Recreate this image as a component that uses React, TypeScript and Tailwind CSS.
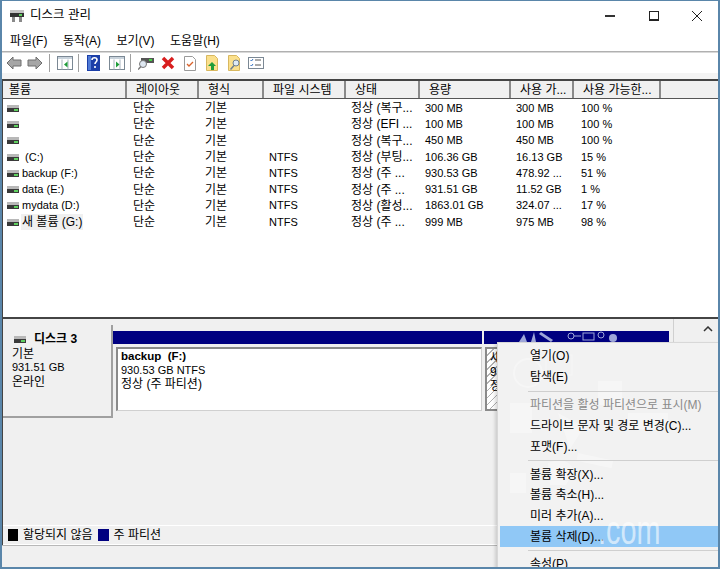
const columns = [
  { name: '볼륨', w: 'w-[124px]' },
  { name: '레이아웃', w: 'w-[72px]' },
  { name: '형식', w: 'w-[65px]' },
  { name: '파일 시스템', w: 'w-[82px]' },
  { name: '상태', w: 'w-[74px]' },
  { name: '용량', w: 'w-[91px]' },
  { name: '사용 가...', w: 'w-[63px]' },
  { name: '사용 가능한...', w: 'w-[87px]' },
];

const volumes = [
  ['', '', '정상 (복구...', '300 MB', '300 MB', '100 %'],
  ['', '', '정상 (EFI ...', '100 MB', '100 MB', '100 %'],
  ['', '', '정상 (복구...', '450 MB', '450 MB', '100 %'],
  ['\u00a0(C:)', 'NTFS', '정상 (부팅...', '106.36 GB', '16.13 GB', '15 %'],
  ['backup (F:)', 'NTFS', '정상 (주 ...', '930.53 GB', '478.92 ...', '51 %'],
  ['data (E:)', 'NTFS', '정상 (주 ...', '931.51 GB', '11.52 GB', '1 %'],
  ['mydata (D:)', 'NTFS', '정상 (활성...', '1863.01 GB', '324.07 ...', '17 %'],
  ['새 볼륨 (G:)', 'NTFS', '정상 (주 ...', '999 MB', '975 MB', '98 %'],
];

const DiskIcon = () => (
  <svg viewBox="0 0 12 7" className="h-[7px] w-[12px] shrink-0">
    <rect width="12" height="3" fill="#b8b8b8" />
    <rect y="3" width="12" height="4" fill="#3a3a3a" />
    <rect x="7" y="4" width="4" height="2" fill="#5fd05f" />
  </svg>
);

const Arrow = ({ flip }: { flip?: boolean }) => (
  <svg viewBox="0 0 16 14" className={`h-[14px] w-[16px] ${flip ? '-scale-x-100' : ''}`}>
    <path d="M1 7l6-6v3h8v6H7v3z" fill="#a6a6a6" stroke="#6e6e6e" />
  </svg>
);

const PanelIcon = ({ right }: { right?: boolean }) => (
  <svg viewBox="0 0 16 14" className="h-[14px] w-[16px]">
    <rect x=".5" y=".5" width="15" height="13" fill="#fff" stroke="#7b8894" />
    <rect x="1" y="1" width="14" height="2" fill="#c9d3dc" />
    <path d="M5 3.500v10M11 3.500v10" stroke="#a8b4bf" />
    {right ? <path d="M7 5.500l3.500 3L7 11.500z" fill="#1f9d3a" /> : <path d="M10.500 5.500L7 8.500l3.500 3z" fill="#1f9d3a" />}
  </svg>
);

const Toolbar = () => (
  <div className="flex h-5 items-center bg-white pl-[4px]">
    <Arrow />
    <div className="ml-[5px]"><Arrow flip /></div>
    <div className="ml-[6px] h-[18px] w-px bg-[#a0a0a0]" />
    <div className="ml-[7px]"><PanelIcon /></div>
    <div className="ml-[5px] h-[18px] w-px bg-[#a0a0a0]" />
    <svg viewBox="0 0 13 16" className="ml-[8px] h-[16px] w-[13px]">
      <rect width="13" height="16" fill="#1c3fa8" />
      <rect x="1" y="1" width="3" height="14" fill="#4f7ad6" />
      <path d="M5 5c0-3 5-3 5 0 0 2-2 2-2 4M8 11v2" fill="none" stroke="#fff" strokeWidth="1.600" />
    </svg>
    <div className="ml-[9px]"><PanelIcon right /></div>
    <div className="ml-[5px] h-[18px] w-px bg-[#a0a0a0]" />
    <svg viewBox="0 0 16 14" className="ml-[7px] h-[14px] w-[16px]">
      <rect x="3" y="2" width="13" height="5" fill="#555" />
      <rect x="11" y="3" width="3" height="2" fill="#46d646" />
      <circle cx="5" cy="8" r="3.500" fill="#dfe8f2" stroke="#777" />
      <path d="M3 10.500L0 13.500" stroke="#777" strokeWidth="1.500" />
    </svg>
    <svg viewBox="0 0 14 14" className="ml-[7px] h-[14px] w-[14px]">
      <path d="M2 2l10 10M12 2L2 12" stroke="#d81e1e" strokeWidth="3.500" />
    </svg>
    <svg viewBox="0 0 12 15" className="ml-[9px] h-[15px] w-[12px]">
      <path d="M.5.500h8l3 3v11H.5z" fill="#fff" stroke="#9a9a9a" />
      <path d="M3 8l2 2 4-4" fill="none" stroke="#d9622b" strokeWidth="1.300" />
    </svg>
    <svg viewBox="0 0 12 16" className="ml-[10px] h-[16px] w-[12px]">
      <path d="M.5.500h8l3 3v12H.5z" fill="#fbe08c" stroke="#d8b860" />
      <path d="M6 7l4 4H8v4H5v-4H2z" fill="#1f9d3a" />
    </svg>
    <svg viewBox="0 0 13 16" className="ml-[10px] h-[16px] w-[13px]">
      <path d="M.5.500h8l3 3v12H.5z" fill="#fbe08c" stroke="#d8b860" />
      <circle cx="8" cy="8" r="3" fill="#dfeaf5" stroke="#6f7f90" />
      <path d="M6 10.500l-3.500 4" stroke="#6f7f90" strokeWidth="1.500" />
    </svg>
    <svg viewBox="0 0 16 12" className="ml-[7px] h-[12px] w-[16px]">
      <rect x=".5" y=".5" width="15" height="11" fill="#fff" stroke="#7b8894" />
      <path d="M2.500 3l1 1 1.500-2M2.500 8l1 1 1.500-2" fill="none" stroke="#2f6fc0" />
      <path d="M7 3h6M7 8h6" stroke="#555" />
    </svg>
  </div>
);

const MenuItem = ({ label, h, disabled }: { label: string; h: string; disabled?: boolean }) => (
  <div className={`flex items-center pl-[32px] ${h} ${disabled ? 'text-[#8a8a8a]' : 'text-black'}`}>{label}</div>
);

const MenuSep = ({ my }: { my: string }) => <div className={`ml-[30px] h-px bg-[#cfcfcf] ${my}`} />;

const Watermark = () => (
  <svg viewBox="0 0 223 227" className="absolute left-0 top-0 h-[227px] w-[223px]" fill="#fff" opacity="0.35">
    <rect x="12" y="60" width="22" height="30" />
    <rect x="48" y="12" width="26" height="20" fill="none" stroke="#fff" />
    <rect x="100" y="38" width="24" height="24" />
    <circle cx="30" cy="30" r="14" fill="none" stroke="#fff" strokeWidth="2" />
    <path d="M60 70l26 14-14 22z" />
    <path d="M130 70h40v16h-40zM20 100l20 30M12 130h16v20H12z" />
    <path d="M50 120c14-6 22-2 26 8l-8 14H52z" />
    <rect x="80" y="110" width="36" height="8" transform="rotate(12 80 110)" />
  </svg>
);

const ContextMenu = () => (
  <div className="absolute left-[495px] top-[341px] h-[227px] w-[223px] overflow-hidden border-l border-t border-[#d8d8d8] bg-[#f2f2f2] pt-[2px] shadow-[-2px_2px_3px_rgba(0,0,0,0.15)]">
    <Watermark />
    <div className="relative">
      <MenuItem label="열기(O)" h="h-[21px]" />
      <MenuItem label="탐색(E)" h="h-[21px]" />
      <MenuSep my="mt-[4px] mb-[3px]" />
      <MenuItem label="파티션을 활성 파티션으로 표시(M)" h="h-[20px]" disabled />
      <MenuItem label="드라이브 문자 및 경로 변경(C)..." h="h-[21px]" />
      <MenuItem label="포맷(F)..." h="h-[21px]" />
      <MenuSep my="mt-[3px] mb-[3px]" />
      <MenuItem label="볼륨 확장(X)..." h="h-[21px]" />
      <MenuItem label="볼륨 축소(H)..." h="h-[20px]" />
      <MenuItem label="미러 추가(A)..." h="h-[21px]" />
      <div className="ml-[2px] bg-[#90c8f6] [&>div]:pl-[30px]"><MenuItem label="볼륨 삭제(D)..." h="h-[21px]" /></div>
      <MenuSep my="mt-[3px] mb-[2px]" />
      <MenuItem label="속성(P)" h="h-[21px]" />
    </div>
    <span className="absolute left-[100px] top-[167px] origin-left scale-x-[0.72] text-[40px] leading-none text-white/60">.com</span>
  </div>
);

export default function App() {
  return (
    <div
      className="relative flex h-[569px] w-[720px] flex-col overflow-hidden border-x-2 border-b-2 border-t border-[#5a86aa] bg-[#f0f0f0] text-[12px] leading-none text-black"
      style={{ fontFamily: '"Liberation Sans", "Noto Sans CJK KR", sans-serif' }}
    >
      {/* title bar */}
      <div className="flex h-[29px] items-center bg-white pl-[7px]">
        <svg viewBox="0 0 16 16" className="h-4 w-4">
          <rect x="1" y="2" width="14" height="3" fill="#c4c4c4" />
          <rect x="1" y="5" width="14" height="4" fill="#333" />
          <rect x="10" y="6" width="3" height="2" fill="#5fd05f" />
          <path d="M3 9h3v5H3zM10 9h3v5h-3z" fill="#8a8a8a" />
        </svg>
        <span className="ml-[5px] text-[12.5px]">디스크 관리</span>
        <div className="ml-auto flex h-full items-center">
          <div className="flex w-[44px] justify-center"><div className="h-[2px] w-[10px] bg-[#333]" /></div>
          <div className="flex w-[44px] justify-center"><div className="h-[10px] w-[10px] border border-[#222] border-b-2" /></div>
          <div className="flex w-[42px] justify-center">
            <svg viewBox="0 0 10 10" className="h-[10px] w-[10px]"><path d="M0 0l10 10M10 0L0 10" stroke="#222" /></svg>
          </div>
        </div>
      </div>

      {/* menu */}
      <div className="flex h-[21px] items-center gap-[15.5px] bg-white pl-[8px]">
        <span>파일(F)</span>
        <span>동작(A)</span>
        <span>보기(V)</span>
        <span>도움말(H)</span>
      </div>
      <div className="h-px bg-[#b0b0b0]" />
      <div className="h-px bg-[#d8d8d8]" />
      <Toolbar />
      <div className="h-[6px] bg-[#f4f4f4]" />

      {/* volume list */}
      <div className="h-[240px] border-y-2 border-l border-[#444] bg-white">
        <div className="flex h-[18px] border-b border-[#555] bg-[#f0f0f0]">
          {columns.map((c, i) => (
            <div key={c.name} className={`${c.w} flex items-center border-r-2 border-[#8a8a8a] ${i === 0 ? 'pl-[6px]' : 'pl-[9px]'}`}>
              {c.name}
            </div>
          ))}
        </div>
        <div className="pt-[1px]">
          {volumes.map((v, i) => (
            <div key={i} className="flex h-[16.3px] items-center whitespace-nowrap">
              <div className="flex w-[124px] items-center pl-[4px]">
                <DiskIcon />
                {i === 7 ? (
                  <span className="ml-[2px] bg-[#f0f0f0] px-[1px] py-[2px]">{v[0]}</span>
                ) : (
                  <span className="ml-[3px] text-[11px]">{v[0]}</span>
                )}
              </div>
              <div className="w-[72px] pl-[6px]">단순</div>
              <div className="w-[65px] pl-[6px]">기본</div>
              <div className="w-[82px] pl-[5px] text-[11px]">{v[1]}</div>
              <div className="w-[74px] pl-[5px]">{v[2]}</div>
              <div className="w-[91px] pl-[5px] text-[11px]">{v[3]}</div>
              <div className="w-[63px] pl-[5px] text-[11px]">{v[4]}</div>
              <div className="w-[87px] pl-[7px] text-[11px]">{v[5]}</div>
            </div>
          ))}
        </div>
      </div>

      {/* disk pane */}
      <div className="flex h-[226px] flex-col border-l border-[#444]">
        <div className="flex flex-1">
          <div className="mt-[6px] flex h-[93px] w-[110px] flex-col gap-[2.5px] border-b-2 border-r-2 border-[#a0a0a0] bg-[#f0f0f0] pl-[9px] pt-[8px]">
            <div className="flex items-center gap-[8px] pl-[2px] font-bold">
              <DiskIcon />
              <span>디스크 3</span>
            </div>
            <span>기본</span>
            <span className="text-[11px]">931.51 GB</span>
            <span>온라인</span>
          </div>
          <div className="mt-[12px] flex h-[80px] w-[369px] flex-col">
            <div className="h-[13px] bg-[#000080]" />
            <div className="ml-[3px] mt-[3px] flex flex-1 flex-col gap-[2px] border-b border-l-2 border-r border-t-2 border-b-[#d0d0d0] border-l-[#8a8a8a] border-r-[#d0d0d0] border-t-[#8a8a8a] bg-white pl-[3px] pt-[2px]">
              <span className="text-[11.5px] font-bold">backup&nbsp; (F:)</span>
              <span className="text-[11px]">930.53 GB NTFS</span>
              <span>정상 (주 파티션)</span>
            </div>
          </div>
          <div className="ml-[2px] mt-[12px] flex h-[80px] w-[185px] flex-col">
            <div className="h-[13px] bg-[#000080]" />
            <div className="ml-[1px] mt-[3px] flex flex-1 flex-col gap-[2px] border-2 border-[#8a8a8a] bg-[repeating-linear-gradient(135deg,#ffffff_0px,#ffffff_4px,#b0b0b0_4px,#b0b0b0_5px)] pl-[3px] pt-[3px]">
              <span>새</span>
              <span>9</span>
              <span>정</span>
            </div>
          </div>
          <div className="ml-auto flex w-[45px] justify-end border-l border-[#d0d0d0]">
            <svg viewBox="0 0 10 6" className="mr-[5px] mt-[7px] h-[6px] w-[10px]">
              <path d="M1 5l4-4 4 4" fill="none" stroke="#333" strokeWidth="1.500" />
            </svg>
          </div>
        </div>
        {/* legend */}
        <div className="flex h-[20px] items-center border-y border-white pl-[5px]">
          <div className="h-[12px] w-[10px] bg-black" />
          <span className="ml-[5px]">할당되지 않음</span>
          <div className="ml-[5px] h-[12px] w-[11px] bg-[#000080]" />
          <span className="ml-[5px]">주 파티션</span>
        </div>
      </div>

      {/* status bar */}
      <div className="flex-1 border-t border-[#b8b8b8] bg-[#f0f0f0]" />

      {/* watermark doodles on the blue bar */}
      <svg viewBox="0 0 100 11" className="absolute left-[515px] top-[330px] h-[11px] w-[100px]" fill="#9ea6d8">
        <path d="M2 11l5-8 3 8zM14 11l3-10 2 10zM24 1l12 8-2 2L22 3z" />
        <circle cx="54" cy="5" r="3" fill="none" stroke="#9ea6d8" />
        <path d="M57 5h7" stroke="#9ea6d8" />
        <rect x="66" y="2" width="11" height="7" fill="none" stroke="#9ea6d8" />
        <circle cx="84" cy="4" r="3" fill="none" stroke="#9ea6d8" />
        <circle cx="96" cy="7" r="4" />
      </svg>

      <ContextMenu />
    </div>
  );
}
